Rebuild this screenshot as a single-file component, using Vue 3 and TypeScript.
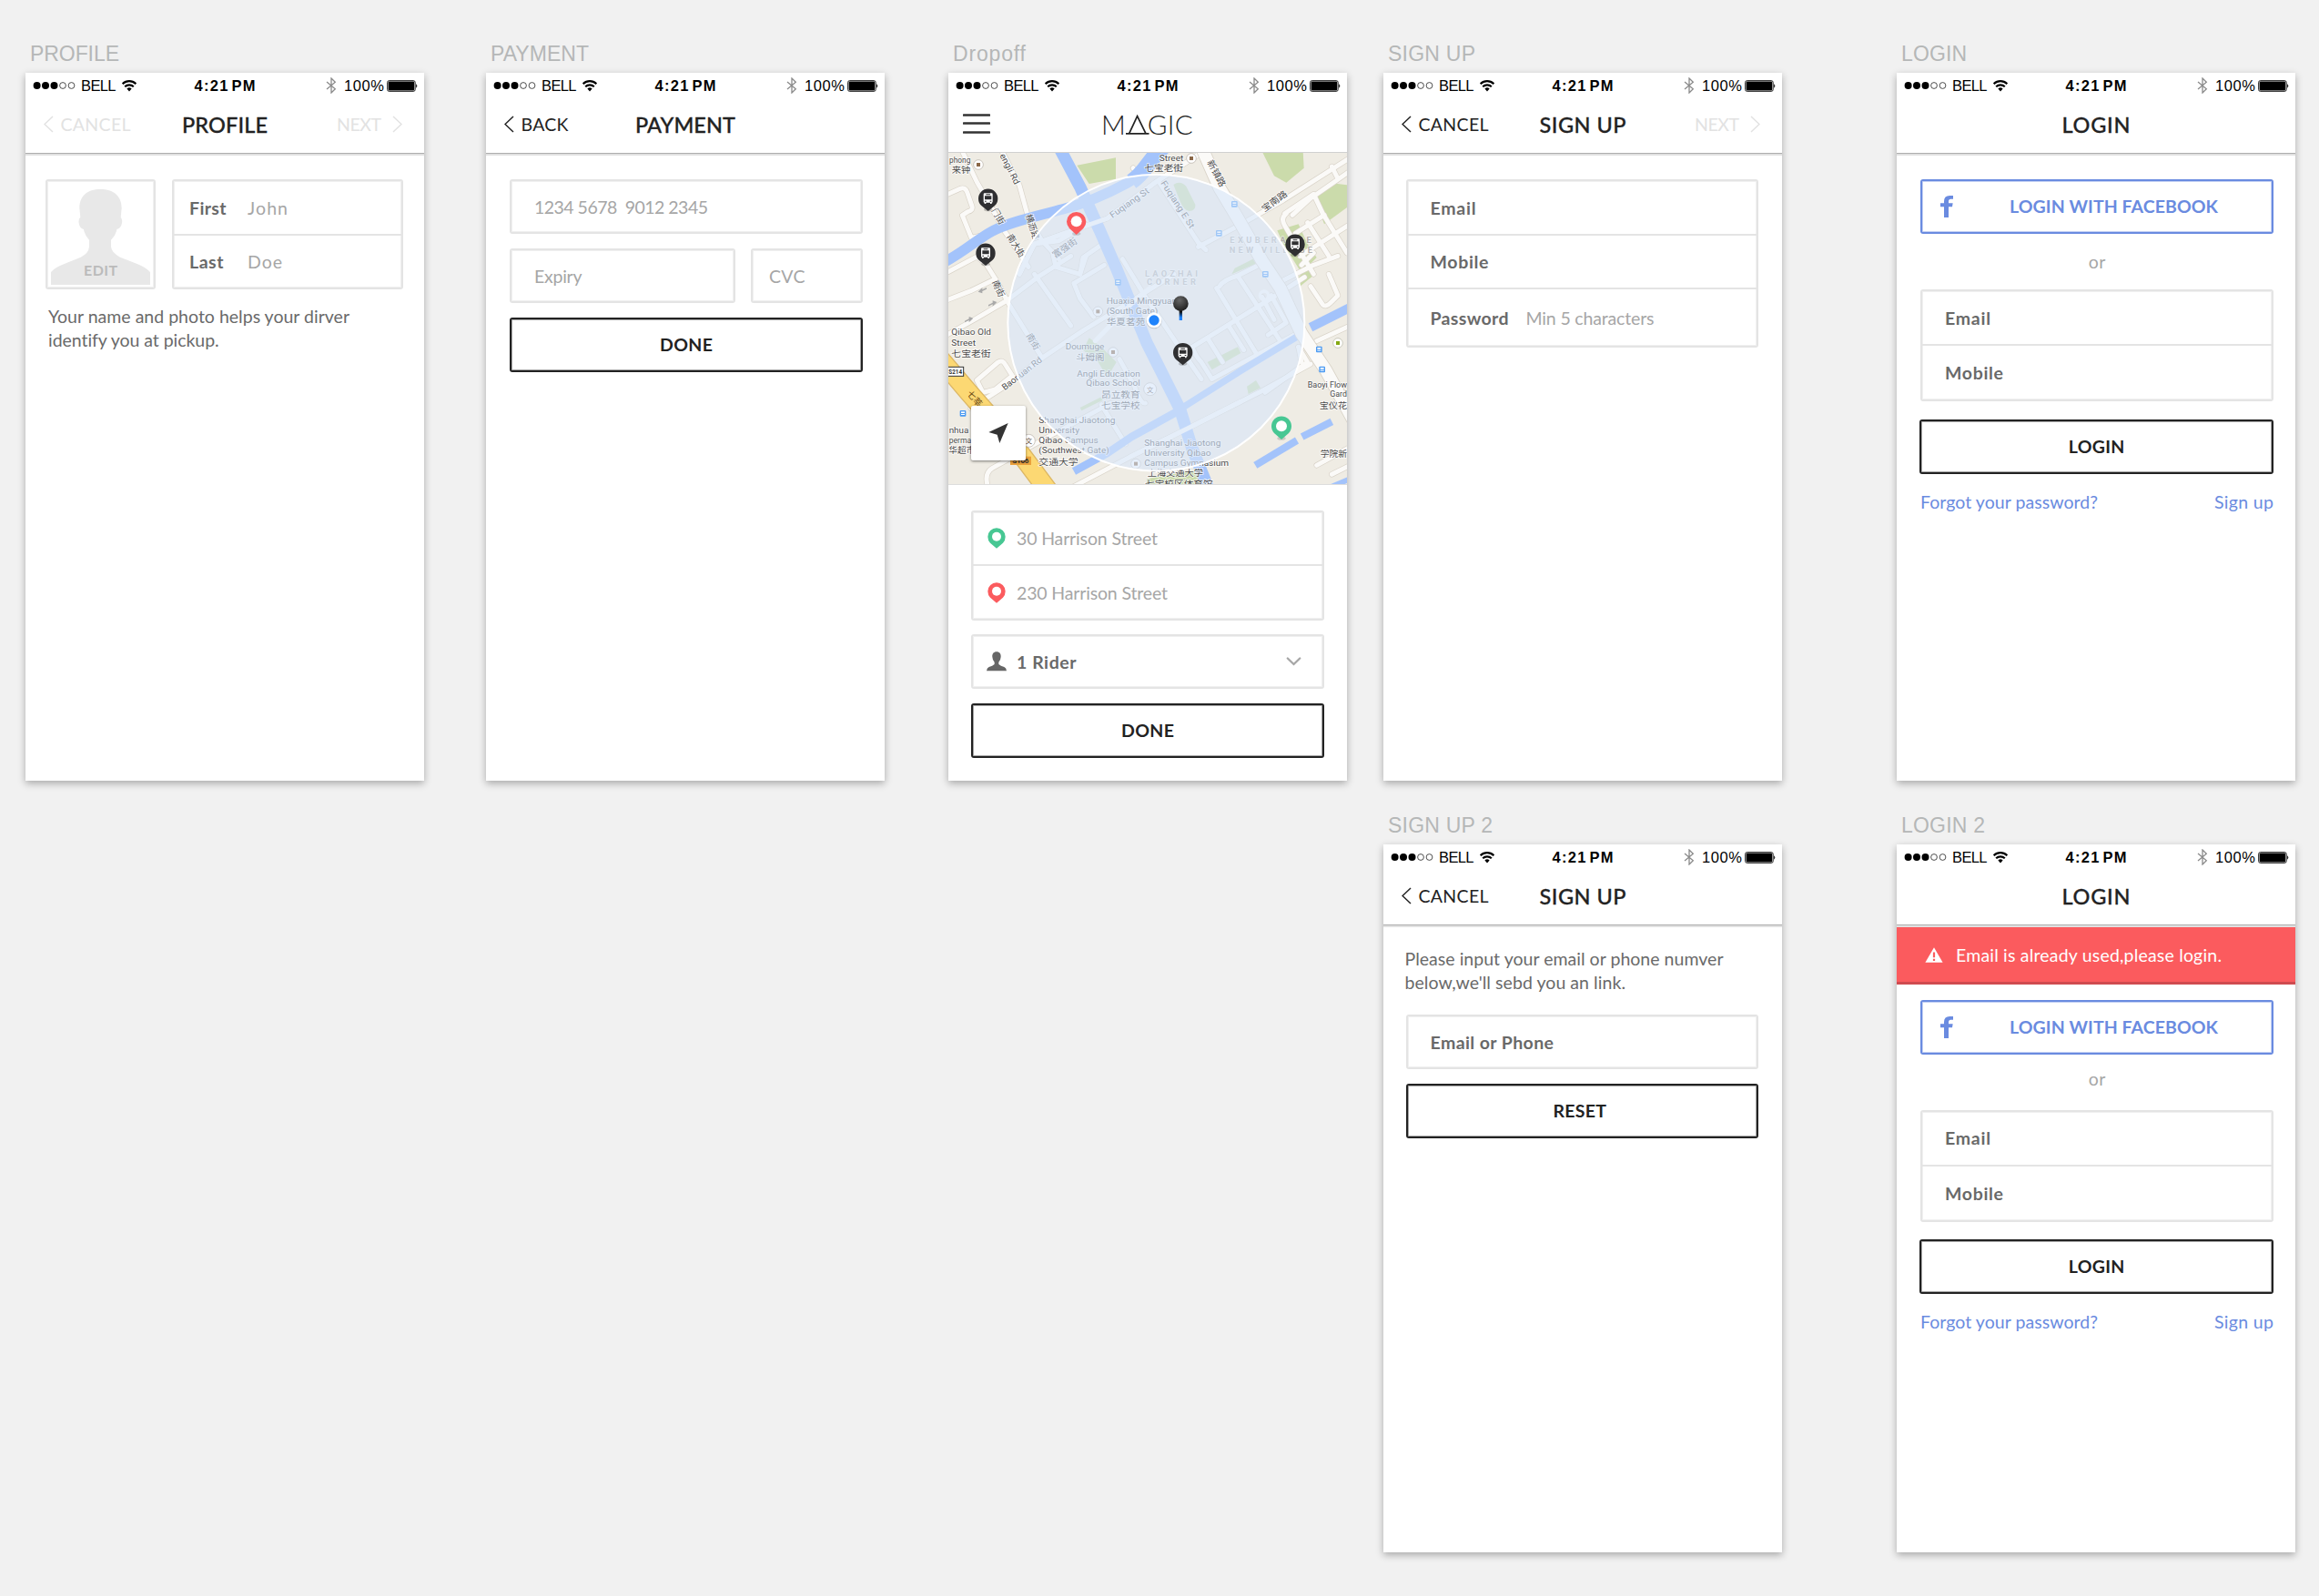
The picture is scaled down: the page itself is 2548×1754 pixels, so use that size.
<script setup lang="ts">
interface Row {
  label?: string
  labelWidth?: number
  hint?: string
  hintWidth?: number
  hintAt?: number
  height: number
}

interface Screen {
  id: string
  label: string
  labelWidth: number
  col: number
  row: number
  title?: string
  titleWidth?: number
  back?: string
  backWidth?: number
  backMuted?: boolean
  next?: boolean
}

interface MapLabel {
  x: number
  y: number
  text: string
  w: number
  end?: boolean
  rot?: number
  kind?: string
}

const screens: Screen[] = [
  { id: 'profile', label: 'PROFILE', labelWidth: 96, col: 1, row: 1, title: 'PROFILE', titleWidth: 92, back: 'CANCEL', backWidth: 75, backMuted: true, next: true },
  { id: 'payment', label: 'PAYMENT', labelWidth: 106, col: 2, row: 1, title: 'PAYMENT', titleWidth: 108, back: 'BACK', backWidth: 50 },
  { id: 'dropoff', label: 'Dropoff', labelWidth: 78, col: 3, row: 1 },
  { id: 'signup', label: 'SIGN UP', labelWidth: 94, col: 4, row: 1, title: 'SIGN UP', titleWidth: 93, back: 'CANCEL', backWidth: 75, next: true },
  { id: 'login', label: 'LOGIN', labelWidth: 70, col: 5, row: 1, title: 'LOGIN', titleWidth: 73 },
  { id: 'signup2', label: 'SIGN UP 2', labelWidth: 113, col: 4, row: 2, title: 'SIGN UP', titleWidth: 93, back: 'CANCEL', backWidth: 75 },
  { id: 'login2', label: 'LOGIN 2', labelWidth: 90, col: 5, row: 2, title: 'LOGIN', titleWidth: 73 },
]

const nameRows: Row[] = [
  { label: 'First', labelWidth: 38.5, hint: 'John', hintWidth: 42, hintAt: 64, height: 58 },
  { label: 'Last', labelWidth: 35.5, hint: 'Doe', hintWidth: 36, hintAt: 64, height: 56 },
]
const signupRows: Row[] = [
  { label: 'Email', labelWidth: 48, height: 58 },
  { label: 'Mobile', labelWidth: 62, height: 57 },
  { label: 'Password', labelWidth: 84, hint: 'Min 5 characters', hintWidth: 139, hintAt: 105, height: 62 },
]
const loginRows: Row[] = [
  { label: 'Email', labelWidth: 48, height: 58 },
  { label: 'Mobile', labelWidth: 62, height: 59 },
]

const rivers = [
  { d: 'M20 362 C90 325 130 285 185 256 S340 205 420 184 S560 135 625 100 S690 20 730 -20', w: 34 },
  { d: 'M640 95 C690 60 690 30 745 -20', w: 52 },
  { d: 'M400 -20 L470 112 L535 256 L592 386 L690 626 L800 846 L840 976 L895 1110', w: 40 },
  { d: 'M792 850 L1000 718 L1190 603', w: 22 },
  { d: 'M1230 575 L1360 510', w: 30 },
  { d: 'M805 845 L640 936 L560 990 L450 1050', w: 26 },
  { d: 'M1048 1030 L1185 948', w: 24 },
  { d: 'M1202 936 L1300 886', w: 24 },
  { d: 'M1300 1100 L1360 1075', w: 18 },
]

const roads = [
  'M75 -20 L130 96 L165 156 L220 256 L300 376',
  'M205 -20 L270 106 L300 216 L345 290 L400 350',
  'M30 138 L75 118 Q92 112 98 130 L114 176 Q118 190 100 194 L82 206 L112 280 L190 262',
  'M36 392 L130 342 L160 366 L200 430 L236 500 L345 676',
  'M30 486 L110 455 L190 416',
  'M20 606 L130 545 L230 486 L330 410 L440 340',
  'M110 842 L230 765 L345 676 L480 586 L660 476 L780 400',
  'M270 400 L320 300 L560 216 L720 96 L900 -20',
  'M320 300 L400 290 L470 250',
  'M380 330 L390 376 L470 400 L490 340',
  'M320 400 L440 570',
  'M450 430 L470 480 L515 540 M450 430 L550 370',
  'M470 400 L480 345 L560 290',
  'M610 350 L680 466 L790 630 L870 746',
  'M730 96 L860 296 L885 320',
  'M645 50 L665 75',
  'M860 310 L1000 236 L1140 156 L1360 16',
  'M1360 60 L1230 150 L1170 205',
  'M1300 45 L1320 85',
  'M1150 200 Q1130 215 1145 240 L1180 300 L1240 400 M1145 200 L1240 136 L1270 200 L1350 330',
  'M1180 265 L1275 205 M1195 340 L1360 235 M1220 230 L1290 340 M1200 370 L1240 330',
  'M1140 420 L1240 370 L1320 340 M1230 440 L1270 500 Q1280 510 1295 495 L1320 470 L1290 400',
  'M840 640 L1100 480 L1210 410',
  'M920 446 L1050 660 M990 406 L1130 620 M930 440 Q940 420 990 405 L1060 370',
  'M840 640 Q850 670 870 690 L905 746 L1195 590',
  'M890 610 L940 690 M960 570 L1010 650 M1190 640 L1220 690 L1080 790',
  'M1070 475 L1110 550 M1100 470 L1150 560 L1090 600',
  'M130 750 L200 690 Q215 680 225 700 L250 740 M130 750 L150 790 L190 780 L240 740',
  'M170 1110 Q150 1060 180 1040 L340 950 L570 826',
  'M540 830 L620 960',
  'M430 1110 L640 1000 L830 906 L1060 790 L1230 696',
  'M600 680 L650 770 Q670 830 685 825',
  'M1190 640 L1200 690',
  'M1250 620 L1360 570 M1250 1030 L1360 970 M1300 1060 L1360 1030',
]

const greens = [
  'M460 41 L588 16 L588 86 L500 102 Z',
  'M1070 -5 L1205 -5 L1208 50 L1150 98 L1110 76 Z',
  'M1240 140 L1300 100 L1350 106 L1350 180 L1275 235 Z',
  'M1120 256 L1190 235 L1220 300 L1250 345 L1200 396 L1140 300 Z',
  'M778 105 Q800 90 820 110 L850 170 Q852 190 830 192 Q812 190 800 160 Z',
  'M1180 420 L1230 370 L1245 400 L1195 440 Z',
  'M500 610 L540 640 L590 690 L560 740 L530 690 L480 650 Z',
  'M890 690 L990 640 L1000 660 L905 715 Z',
  'M1020 770 L1050 750 L1065 775 L1025 795 Z',
  'M980 380 L1040 350 L1050 365 L970 400 Z',
  'M690 1075 L880 1040 L900 1095 L690 1095 Z',
  'M470 840 L540 805 L545 815 L475 850 Z',
]

const labels: MapLabel[] = [
  { x: 109, y: 33, text: 'phong', w: 70, end: true },
  { x: 109, y: 66, text: '来钟', w: 62, end: true },
  { x: 205, y: 8, text: 'engli Rd', w: 110, rot: 63 },
  { x: 811, y: 26, text: 'Street', w: 80, end: true },
  { x: 810, y: 61, text: '七宝老街', w: 128, end: true },
  { x: 888, y: 30, text: '新镇路', w: 96, rot: 62 },
  { x: 1078, y: 196, text: '宝南路', w: 96, rot: -36 },
  { x: 577, y: 216, text: 'Fuqiang St', w: 150, rot: -35 },
  { x: 735, y: 100, text: 'Fuqiang E St', w: 180, rot: 57 },
  { x: 388, y: 348, text: '富强街', w: 92, rot: -35 },
  { x: 290, y: 206, text: '横沥路', w: 86, rot: 72 },
  { x: 178, y: 190, text: '门街', w: 56, rot: 60 },
  { x: 228, y: 276, text: '南大街', w: 84, rot: 58 },
  { x: 180, y: 425, text: '南街', w: 58, rot: 66 },
  { x: 292, y: 602, text: '南街', w: 58, rot: 60 },
  { x: 557, y: 498, text: 'Huaxia Mingyuan', w: 232 },
  { x: 557, y: 530, text: '(South Gate)', w: 170 },
  { x: 557, y: 568, text: '华夏茗苑', w: 128 },
  { x: 46, y: 601, text: 'Qibao Old', w: 131 },
  { x: 46, y: 635, text: 'Street', w: 80 },
  { x: 46, y: 671, text: '七宝老街', w: 130 },
  { x: 550, y: 647, text: 'Doumuge', w: 128, end: true },
  { x: 550, y: 685, text: '斗姆阁', w: 94, end: true },
  { x: 222, y: 784, text: 'Baonuan Rd', w: 158, rot: -38 },
  { x: 668, y: 737, text: 'Angli Education', w: 208, end: true },
  { x: 668, y: 769, text: 'Qibao School', w: 178, end: true },
  { x: 668, y: 808, text: '昂立教育', w: 128, end: true },
  { x: 668, y: 842, text: '七宝学校', w: 128, end: true },
  { x: 334, y: 892, text: 'Shanghai Jiaotong', w: 252 },
  { x: 334, y: 924, text: 'University', w: 134 },
  { x: 334, y: 957, text: 'Qibao Campus', w: 196 },
  { x: 334, y: 990, text: '(Southwest Gate)', w: 232 },
  { x: 334, y: 1028, text: '交通大学', w: 130 },
  { x: 682, y: 966, text: 'Shanghai Jiaotong', w: 252 },
  { x: 682, y: 1000, text: 'University Qibao', w: 220 },
  { x: 682, y: 1033, text: 'Campus Gymnasium', w: 278 },
  { x: 692, y: 1065, text: '上海交通大学', w: 184 },
  { x: 684, y: 1100, text: '七宝校区体育馆', w: 224 },
  { x: 1220, y: 773, text: 'Baoyi Flow', w: 130 },
  { x: 1294, y: 805, text: 'Gard', w: 56 },
  { x: 1259, y: 842, text: '宝仪花', w: 91 },
  { x: 1262, y: 1001, text: '学院新', w: 88 },
  { x: 38, y: 924, text: 'nhua', w: 65 },
  { x: 38, y: 957, text: 'perma', w: 74 },
  { x: 37, y: 991, text: '华超市', w: 87 },
  { x: 95, y: 795, text: '七莘', w: 60, rot: 48, kind: 'amber' },
]

const districts: MapLabel[] = [
  { x: 964, y: 298, text: 'EXUBERANCE', w: 268 },
  { x: 962, y: 330, text: 'NEW VILLAGE', w: 274 },
  { x: 684, y: 407, text: 'LAOZHAI', w: 174 },
  { x: 690, y: 436, text: 'CORNER', w: 162 },
]

const buses = [[167, 151], [159, 331], [1179, 301], [809, 659]]
const pois = [[135, 39], [837, 18], [529, 523], [579, 657], [654, 1025]]
const stops = [[979, 169], [928, 265], [1081, 400], [595, 427], [1258, 648], [1268, 714], [84, 859]]

function fit(el: HTMLElement, width: number) {
  el.style.letterSpacing = '0px'
  const natural = el.getBoundingClientRect().width
  const n = Math.max(1, (el.textContent ?? '').length - 1)
  const gap = (width + 2 - natural) / n
  el.style.letterSpacing = `${gap.toFixed(3)}px`
  el.style.marginRight = `${(-gap).toFixed(3)}px`
}

const vFit = {
  mounted: (el: HTMLElement, binding: { value?: number }) => {
    if (binding.value) fit(el, binding.value)
  },
}
</script>

<template>
  <main class="canvas">
    <section v-for="s in screens" :key="s.id" class="cell" :style="{ gridColumn: s.col, gridRow: s.row }">
      <h2 class="cell-label"><span v-fit="s.labelWidth" class="t">{{ s.label }}</span></h2>

      <div class="board" :class="s.id">
        <div class="status">
          <div class="status-left">
            <svg class="dots" width="49" height="10" viewBox="0 0 49 10">
              <circle cx="4.6" cy="5" r="4" /><circle cx="14" cy="5" r="4" /><circle cx="23.5" cy="5" r="4" />
              <circle class="hollow" cx="33" cy="5" r="3.4" /><circle class="hollow" cx="42.5" cy="5" r="3.4" />
            </svg>
            <span v-fit="36.5" class="t carrier">BELL</span>
            <svg class="wifi" width="16" height="13" viewBox="0 0 16 13">
              <path d="M.6 4.2 A10.6 10.6 0 0 1 15.4 4.2" /><path d="M3.2 7.3 A6.8 6.8 0 0 1 12.8 7.3" />
              <path class="solid" d="M5.4 9.6 A3.7 3.7 0 0 1 10.6 9.6 L8 12.6 Z" />
            </svg>
          </div>
          <div class="clock"><span v-fit="65" class="t">4:21 PM</span></div>
          <div class="status-right">
            <svg class="bt" width="12" height="18" viewBox="0 0 12 18"><path d="M1 5 L10.3 12.8 L6 17 V1 L10.3 5.2 L1 13" /></svg>
            <span v-fit="42" class="t">100%</span>
            <svg class="battery" width="35" height="13" viewBox="0 0 35 13">
              <rect x=".6" y=".6" width="30.6" height="11.8" rx="2" fill="#fff" stroke="#111" stroke-width=".9" />
              <rect x="1.6" y="1.4" width="28.6" height="10.2" rx="1" /><path d="M32.2 4.3 Q34.4 6.5 32.2 8.7 Z" />
            </svg>
          </div>
        </div>

        <header v-if="s.id === 'dropoff'" class="nav nav-map">
          <svg class="menu" width="30" height="22" viewBox="0 0 30 22"><path d="M1 1.5 H29 M1 10.5 H29 M1 20.5 H29" /></svg>
          <div class="logo">
            <span v-fit="20" class="t">M</span>
            <svg width="26" height="22" viewBox="0 0 26 22"><path d="M0 20.8 H25.5 M3.6 20.8 L12.6 1.6 L22 20.8" /></svg>
            <span v-fit="48" class="t">GIC</span>
          </div>
        </header>
        <header v-else class="nav">
          <div class="nav-side" :class="{ muted: s.backMuted }">
            <template v-if="s.back">
              <svg width="11" height="19" viewBox="0 0 11 19"><path d="M10 1 L1 9.5 L10 18" /></svg>
              <span v-fit="s.backWidth" class="t">{{ s.back }}</span>
            </template>
          </div>
          <h1><span v-fit="s.titleWidth" class="t">{{ s.title }}</span></h1>
          <div class="nav-side end muted">
            <template v-if="s.next">
              <span v-fit="47" class="t">NEXT</span>
              <svg width="11" height="19" viewBox="0 0 11 19"><path d="M1 1 L10 9.5 L1 18" /></svg>
            </template>
          </div>
        </header>

        <div v-if="s.id === 'profile'" class="body">
          <div class="identity">
            <div class="avatar">
              <svg width="109" height="105" viewBox="0 0 327 315">
                <path d="M163 0 C120 0 94 22 94 62 L97 92 Q90 96 92 112 Q95 130 108 132 Q110 150 126 167 V190 Q124 212 98 224 L44 246 Q14 257 0 273 V315 H327 V273 Q312 257 284 246 L228 224 Q200 210 198 190 V167 Q214 152 217 132 Q230 130 234 112 Q236 98 230 92 L233 62 C233 22 206 0 163 0 Z" />
              </svg>
              <span v-fit="35" class="t edit">EDIT</span>
            </div>
            <div class="group">
              <div v-for="r in nameRows" :key="r.label" class="row" :style="{ height: `${r.height}px` }">
                <span class="slot" :style="{ width: `${r.hintAt}px` }"><b v-fit="r.labelWidth" class="t">{{ r.label }}</b></span>
                <span v-fit="r.hintWidth" class="t hint">{{ r.hint }}</span>
              </div>
            </div>
          </div>
          <p class="copy">
            <span v-fit="329" class="t">Your name and photo helps your dirver</span>
            <span v-fit="186" class="t">identify you at pickup.</span>
          </p>
        </div>

        <div v-else-if="s.id === 'payment'" class="body stack">
          <div class="field"><span v-fit="189" class="t hint">1234 5678&nbsp; 9012 2345</span></div>
          <div class="split">
            <div class="field expiry"><span v-fit="50.5" class="t hint">Expiry</span></div>
            <div class="field cvc"><span v-fit="37.5" class="t hint">CVC</span></div>
          </div>
          <button class="action"><span v-fit="56" class="t">DONE</span></button>
        </div>

        <template v-else-if="s.id === 'dropoff'">
          <div class="map">
            <svg width="438" height="364" viewBox="36 0 1314 1092">
              <rect x="36" width="1314" height="1092" fill="#efece4" />
              <path v-for="g in greens" :key="g" :d="g" fill="#cbdbab" />
              <path v-for="d in roads" :key="'c' + d" :d="d" class="road casing" />
              <path v-for="d in roads" :key="d" :d="d" class="road" />
              <path v-for="r in rivers" :key="r.d" :d="r.d" class="river" :stroke-width="r.w" />
              <path class="road" d="M270 400 L320 300 L560 216 L720 96 L900 -20" />
              <path class="road" d="M520 620 L660 476 L700 446 M640 1000 L830 906 L1000 820" />
              <path d="M870 -20 L930 116 L990 216 L1070 356 L1130 446 L1200 596 L1280 716 L1370 880" class="road trunk-casing" />
              <path d="M870 -20 L930 116 L990 216 L1070 356 L1130 446 L1200 596 L1280 716 L1370 880" class="road trunk" />
              <circle cx="1077" cy="470" r="14" class="road ring" />
              <path d="M10 680 L100 786 L170 866 L270 986 L370 1120" fill="none" stroke="#dcb765" stroke-width="66" />
              <path d="M10 680 L100 786 L170 866 L270 986 L370 1120" fill="none" stroke="#fcd873" stroke-width="58" />
              <rect x="30" y="706" width="56" height="30" fill="#fff" stroke="#333" stroke-width="3" />
              <text x="37" y="730" class="shield" textLength="44" lengthAdjust="spacingAndGlyphs">S214</text>
              <rect x="240" y="1001" width="69" height="28" fill="#eaa13c" />
              <text x="247" y="1024" class="shield" textLength="54">S106</text>

              <g v-for="l in labels" :key="l.text + l.x + l.y" :transform="`translate(${l.x} ${l.y}) rotate(${l.rot ?? 0})`">
                <text class="place" :class="l.kind" :text-anchor="l.end ? 'end' : 'start'" :textLength="l.w" lengthAdjust="spacingAndGlyphs">{{ l.text }}</text>
              </g>
              <text v-for="l in districts" :key="l.text" class="district" :x="l.x" :y="l.y" :textLength="l.w">{{ l.text }}</text>

              <g v-for="p in pois" :key="p.join()" :transform="`translate(${p[0]} ${p[1]})`">
                <circle r="16" fill="#fff" stroke="#b5aea5" stroke-width="2" /><rect x="-6" y="-6" width="12" height="12" fill="#8a6747" />
              </g>
              <g transform="translate(1320 627)"><circle r="16" fill="#fff" stroke="#b5b5a5" stroke-width="2" /><rect x="-6" y="-6" width="12" height="12" fill="#85a813" /></g>
              <g v-for="p in [[701, 779], [301, 949]]" :key="p.join()" :transform="`translate(${p[0]} ${p[1]})`">
                <circle r="21" fill="#fff" stroke="#b5aea5" stroke-width="2" /><text class="school" x="-11" y="9">文</text>
              </g>
              <g v-for="p in stops" :key="p.join()" :transform="`translate(${p[0]} ${p[1]})`">
                <rect x="-10" y="-10" width="20" height="20" rx="3" fill="#4b9af2" /><rect x="-6" y="-6" width="12" height="5" fill="#fff" /><rect x="-6" y="2" width="12" height="3" fill="#fff" />
              </g>
              <g fill="#a9a9a9">
                <path d="M134 458 l14 -14 v7 l14 -7 v5 l-14 7 v7 Z" /><path d="M196 492 l-14 14 v-7 l-14 7 v-5 l14 -7 v-7 Z" /><path d="M118 545 l-14 14 v-7 l-14 7 v-5 l14 -7 v-7 Z" />
              </g>

              <circle cx="721" cy="560" r="489" fill="rgba(215,230,250,.6)" stroke="#fff" stroke-width="6" />

              <g v-for="b in buses" :key="b.join()" :transform="`translate(${b[0]} ${b[1]})`">
                <ellipse cx="0" cy="36" rx="14" ry="6" fill="#000" opacity=".2" />
                <path d="M0 41 L-22 23 A32 32 0 1 1 22 23 Z" fill="#2f2f31" />
                <path d="M-12 -18 H12 Q15 -18 15 -14 V10 Q15 13 12 13 V17 H7 V13 H-7 V17 H-12 V13 Q-15 13 -15 10 V-14 Q-15 -18 -12 -18 Z" fill="#fff" />
                <path d="M-7 -15 H7 V-12 H-7 Z M-11 -9 H11 V3 H-11 Z M-11 7 h5 v3 h-5 Z M6 7 h5 v3 h-5 Z" fill="#2f2f31" />
              </g>
              <g transform="translate(458 226)">
                <ellipse cx="0" cy="40" rx="14" ry="6" fill="#000" opacity=".15" />
                <path d="M0 44 L-23 23 A32 32 0 1 1 23 23 Z" fill="#fb5b5e" /><circle r="18" fill="#fff" />
              </g>
              <g transform="translate(1134 901)">
                <ellipse cx="0" cy="40" rx="14" ry="6" fill="#000" opacity=".15" />
                <path d="M0 44 L-24 23 A33 33 0 1 1 24 23 Z" fill="#47c793" /><circle r="18" fill="#fff" />
              </g>
              <circle cx="714" cy="554" r="26" fill="#000" opacity=".15" />
              <circle cx="714" cy="552" r="25" fill="#fff" /><circle cx="714" cy="552" r="17" fill="#1f83fb" />
              <defs>
                <radialGradient id="ball" cx=".42" cy=".28" r=".75"><stop offset="0" stop-color="#666" /><stop offset="1" stop-color="#1d1d1d" /></radialGradient>
                <linearGradient id="stem" x1="0" y1="0" x2="0" y2="1"><stop offset=".25" stop-color="#111" /><stop offset=".75" stop-color="#1f83fb" /></linearGradient>
              </defs>
              <rect x="797" y="515" width="10" height="37" fill="url(#stem)" /><circle cx="802" cy="497" r="25" fill="url(#ball)" />
            </svg>
            <button class="locate"><svg width="22" height="22" viewBox="0 0 64 66"><path d="M64 0 L0 30 L28 38 L36 66 Z" fill="#333" /></svg></button>
          </div>
          <div class="body trip">
            <div class="group">
              <div class="row first">
                <svg class="pin green" width="20" height="23" viewBox="0 0 60 69"><path d="M30 68 L9 50 A29 29 0 1 1 51 50 Z" /><circle cx="30" cy="29" r="15" fill="#fff" /></svg>
                <span v-fit="153" class="t hint">30 Harrison Street</span>
              </div>
              <div class="row second">
                <svg class="pin red" width="20" height="23" viewBox="0 0 60 69"><path d="M30 68 L9 50 A29 29 0 1 1 51 50 Z" /><circle cx="30" cy="29" r="15" fill="#fff" /></svg>
                <span v-fit="164" class="t hint">230 Harrison Street</span>
              </div>
            </div>
            <div class="field rider">
              <svg class="person" width="22" height="22" viewBox="0 0 66 66"><path d="M33 1 C23 1 18 8 19 18 Q20 30 26 35 V42 Q20 48 8 51 Q1 54 0 64 H66 Q65 54 58 51 Q46 48 40 42 V35 Q46 30 47 18 C48 8 43 1 33 1 Z" /></svg>
              <b v-fit="63.5" class="t">1 Rider</b>
              <svg class="caret" width="17" height="10" viewBox="0 0 17 10"><path d="M1.8 1.5 L8.5 8 L15.2 1.5" /></svg>
            </div>
            <button class="action"><span v-fit="56" class="t">DONE</span></button>
          </div>
        </template>

        <div v-else-if="s.id === 'signup'" class="body">
          <div class="group">
            <div v-for="r in signupRows" :key="r.label" class="row" :style="{ height: `${r.height}px` }">
              <span class="slot" :style="{ width: `${r.hintAt ?? 105}px` }"><b v-fit="r.labelWidth" class="t">{{ r.label }}</b></span>
              <span v-if="r.hint" v-fit="r.hintWidth" class="t hint">{{ r.hint }}</span>
            </div>
          </div>
        </div>

        <div v-else-if="s.id === 'signup2'" class="body">
          <p class="copy">
            <span v-fit="348" class="t">Please input your email or phone numver</span>
            <span v-fit="240.5" class="t">below,we'll sebd you an link.</span>
          </p>
          <div class="field"><b v-fit="133.5" class="t">Email or Phone</b></div>
          <button class="action reset"><span v-fit="56.5" class="t">RESET</span></button>
        </div>

        <template v-else>
          <div v-if="s.id === 'login2'" class="alert">
            <svg width="20" height="17" viewBox="0 0 20 17"><path d="M10 .3 L19.6 16.8 H.4 Z" fill="#fff" /><path d="M10 5.5 V11.3 M10 12.8 V15" stroke="#fb5b5e" stroke-width="2.2" /></svg>
            <span v-fit="290" class="t">Email is already used,please login.</span>
          </div>
          <div class="body">
            <button class="action facebook">
              <svg width="14" height="24" viewBox="0 0 42 72"><path d="M12 72 V37 H0 V25 H12 V19 Q12 0 31 0 H42 V11 H34 Q27 11 27 19 V25 H41 L39 37 H27 V72 Z" /></svg>
              <span v-fit="227" class="t">LOGIN WITH FACEBOOK</span>
            </button>
            <div class="or"><span v-fit="16.5" class="t">or</span></div>
            <div class="group">
              <div v-for="r in loginRows" :key="r.label" class="row" :style="{ height: `${r.height}px` }"><b v-fit="r.labelWidth" class="t">{{ r.label }}</b></div>
            </div>
            <button class="action login-btn"><span v-fit="59.5" class="t">LOGIN</span></button>
            <div class="links">
              <a v-fit="193" class="t">Forgot your password?</a>
              <a v-fit="63" class="t">Sign up</a>
            </div>
          </div>
        </template>
      </div>
    </section>
  </main>
</template>

<style>
body {
  background: #f1f1f1;
}
</style>

<style scoped>
.canvas {
  box-sizing: border-box;
  width: 2548px;
  height: 1754px;
  padding: 46px 0 0 28px;
  background: #f1f1f1;
  display: grid;
  grid-template-columns: 506px 508px 478px 564px 438px;
  grid-template-rows: 812px 812px;
  row-gap: 36px;
  font-family: Lato, "Noto Sans", sans-serif;
  font-size: 19.5px;
  color: #222;
  overflow: hidden;
}
.cell {
  width: 438px;
}
.t {
  display: inline-block;
  white-space: pre;
}
.cell-label {
  margin: 0;
  height: 34px;
  padding-left: 5px;
  font: 400 23px/26px "Liberation Sans", Arial, sans-serif;
  color: #b5b7b7;
}
.board {
  height: 778px;
  background: #fff;
  box-shadow: 0 3px 8px rgba(0, 0, 0, 0.3);
  display: flex;
  flex-direction: column;
}
.status {
  height: 28px;
  flex: none;
  display: grid;
  grid-template-columns: 1fr auto 1fr;
  align-items: center;
  font: 400 16.5px/28px "Liberation Sans", Arial, sans-serif;
  color: #000;
}
.status-left,
.status-right {
  display: flex;
  align-items: center;
}
.status-left {
  padding-left: 8px;
}
.status-right {
  justify-content: flex-end;
  padding-right: 6px;
}
.carrier {
  margin-left: 4px;
}
.dots .hollow {
  fill: none;
  stroke: #222;
  stroke-width: 0.8;
}
.wifi {
  margin-left: 6.5px;
}
.wifi path {
  fill: none;
  stroke: #000;
  stroke-width: 2.2;
}
.wifi .solid {
  fill: #000;
  stroke: none;
}
.clock {
  font-weight: 700;
  word-spacing: -3px;
}
.bt {
  margin-right: 8px;
}
.bt path {
  fill: none;
  stroke: #8a8a8a;
  stroke-width: 1.3;
}
.battery {
  margin-left: 3px;
}
.nav {
  box-sizing: border-box;
  height: 63px;
  flex: none;
  display: grid;
  grid-template-columns: 1fr auto 1fr;
  padding: 0 20px;
  border-bottom: 2px solid #e1e1e1;
  box-shadow: inset 0 -1px #adadad;
  line-height: 57px;
}
.nav h1 {
  margin: 0;
  font-size: 23.5px;
  font-weight: 500;
  line-height: 58px;
  -webkit-text-stroke: 0.3px #222;
}
.nav-side {
  display: flex;
  align-items: center;
  height: 57px;
  gap: 7.5px;
}
.nav-side.end {
  justify-content: flex-end;
  gap: 12px;
  margin-right: 4px;
  margin-left: -4px;
}
.nav-side svg path {
  fill: none;
  stroke: currentColor;
  stroke-width: 1.5;
}
.muted {
  color: #e2e2e2;
}
.nav-map {
  height: 60px;
  border-bottom: 0;
  box-shadow: inset 0 -1px #d0d0d0;
  grid-template-columns: 30px 1fr;
  padding: 0 16px;
}
.menu {
  margin-top: 17px;
}
.menu path {
  stroke: #333;
  stroke-width: 2.6;
  stroke-linecap: round;
}
.logo {
  display: flex;
  padding-left: 122px;
  font-size: 29.5px;
  font-weight: 300;
  line-height: 58px;
}
.logo svg {
  margin: 18px -2px 0 0;
}
.logo svg path {
  fill: none;
  stroke: #222;
  stroke-width: 1.7;
}
.body {
  padding: 26px 24px 0 25px;
}
.payment .body,
.login .body,
.login2 .body {
  padding-left: 26px;
}
.signup .body,
.signup2 .body {
  padding: 26px 26px 0 24.5px;
}
.field,
.group,
.avatar,
.action {
  box-sizing: border-box;
  border: 2px solid #e4e4e4;
  border-radius: 3px;
  box-shadow: inset 0 0 0 1px #f0f0f0;
  background: #fff;
}
.field {
  height: 60px;
  display: flex;
  align-items: center;
  padding-left: 25px;
}
.hint {
  color: #a6a6a6;
}
b {
  color: #696969;
}
.row {
  display: flex;
  align-items: center;
  padding-left: 25px;
}
.row + .row {
  border-top: 2px solid #e4e4e4;
}
.slot {
  flex: none;
}
.action {
  width: 100%;
  height: 60px;
  display: flex;
  align-items: center;
  justify-content: center;
  padding: 0;
  font: 700 19.5px/24px Lato, sans-serif;
  color: #222;
  border-color: #222;
  box-shadow: inset 0 0 0 1px #a5a5a5;
}
.identity {
  display: flex;
  gap: 18px;
  margin-left: -3px;
  margin-right: -1px;
}
.avatar {
  width: 121px;
  height: 121px;
  display: grid;
  justify-items: center;
  align-items: end;
  padding-bottom: 3px;
}
.avatar > * {
  grid-area: 1 / 1;
}
.avatar path {
  fill: #e8e8e8;
}
.edit {
  font-size: 16px;
  font-weight: 700;
  line-height: 20px;
  margin-bottom: 6px;
  color: #bbb;
}
.identity .group {
  flex: 1;
}
.identity .row {
  padding-left: 17px;
}
.copy {
  margin: 17px 0 0;
  line-height: 26px;
  color: #6a6a6a;
  display: flex;
  flex-direction: column;
  align-items: flex-start;
}
.stack {
  display: flex;
  flex-direction: column;
  gap: 16px;
}
.split {
  display: flex;
  gap: 17px;
}
.expiry {
  width: 248px;
}
.cvc {
  flex: 1;
  padding-left: 18px;
}
.map {
  position: relative;
  height: 364px;
  border-bottom: 1px solid #ddd;
  margin-bottom: -1px;
}
.map > svg {
  display: block;
}
.road {
  fill: none;
  stroke: #fbfaf8;
  stroke-width: 15;
  stroke-linejoin: round;
  stroke-linecap: round;
}
.casing {
  stroke: #d9d3c8;
  stroke-width: 19;
}
.trunk {
  stroke-width: 40;
}
.trunk-casing {
  stroke: #d9d3c8;
  stroke-width: 45;
}
.ring {
  stroke-width: 10;
}
.river {
  fill: none;
  stroke: #a3c3fb;
  stroke-linejoin: round;
}
.place {
  font: 400 29px Roboto, "Noto Sans CJK SC", sans-serif;
  fill: #4c4c4c;
  stroke: #fff;
  stroke-width: 5px;
  stroke-opacity: 0.75;
  paint-order: stroke;
}
.place.amber {
  fill: #6b4a12;
  stroke: #fcd873;
}
.district {
  font: 700 28px Roboto, sans-serif;
  fill: #b3b1ac;
  stroke: #fff;
  stroke-width: 4px;
  stroke-opacity: 0.6;
  paint-order: stroke;
}
.shield {
  font: 700 24px Roboto, sans-serif;
  fill: #333;
}
.school {
  font: 22px "Noto Sans CJK SC", sans-serif;
  fill: #6e5848;
}
.locate {
  position: absolute;
  left: 25px;
  top: 278px;
  width: 60px;
  height: 60px;
  padding: 0;
  border: 0;
  border-radius: 2px;
  background: #fff;
  box-shadow: 0 1px 3px rgba(0, 0, 0, 0.5);
  display: grid;
  place-items: center;
}
.trip {
  padding: 29px 25px 0 25px;
}
.trip .row,
.rider {
  padding-left: 15px;
}
.trip .pin,
.person {
  width: 22px;
  flex: none;
  margin-right: 11px;
}
.trip .first {
  height: 57px;
}
.trip .second {
  height: 57px;
  padding-top: 1px;
}
.green path {
  fill: #47c793;
}
.red path {
  fill: #fb5b5e;
}
.person path {
  fill: #666;
}
.rider {
  margin: 15px 0 16px;
}
.caret {
  margin-left: auto;
  margin-right: 23px;
}
.caret path {
  fill: none;
  stroke: #a6a6a6;
  stroke-width: 2.3;
  stroke-linecap: round;
}
.signup2 .copy {
  margin: -4px 0 22px -1px;
}
.reset {
  margin-top: 16px;
  padding-right: 5px;
}
.alert {
  box-sizing: border-box;
  height: 63px;
  flex: none;
  display: flex;
  align-items: center;
  gap: 14px;
  padding-left: 31px;
  background: #fb5b5e;
  border-bottom: 3px solid #cf4b50;
  color: #fff;
}
.login2 .body {
  padding-top: 16.5px;
}
.facebook {
  position: relative;
  justify-content: flex-start;
  padding-left: 20px;
  gap: 62px;
  color: #6a8be0;
  border-color: #6a8be0;
  box-shadow: inset 0 0 0 1px #c3d0f3;
}
.facebook path {
  fill: #6a8be0;
}
.or {
  height: 61px;
  line-height: 62px;
  text-align: center;
  color: #a6a6a6;
}
.login2 .or {
  line-height: 53px;
}
.login-btn {
  margin: 19.5px 0 0 -1px;
  width: 389px;
}
.links {
  display: flex;
  justify-content: space-between;
  line-height: 24px;
  margin-top: 19px;
  color: #6a8be0;
}
</style>
